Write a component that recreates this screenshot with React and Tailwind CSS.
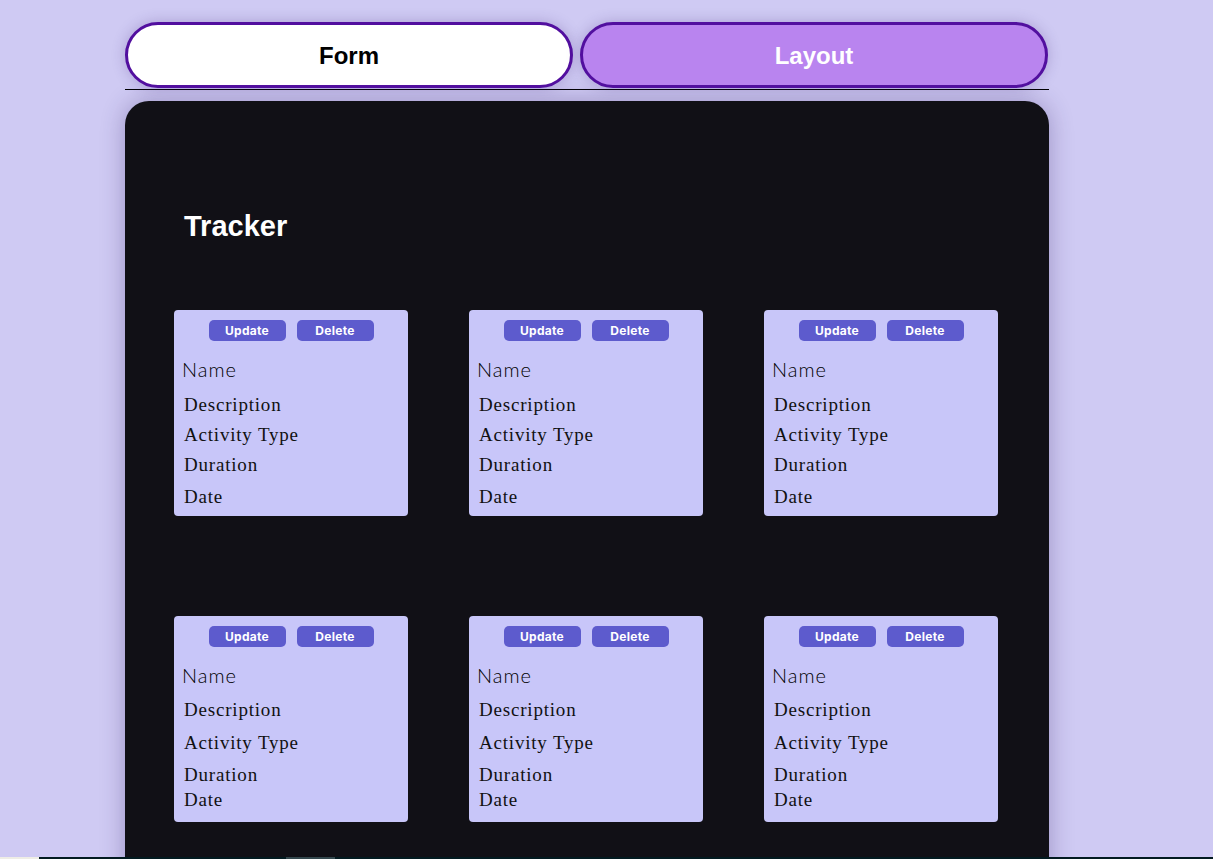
import React from "react";

function Card({ second }) {
  const serif = { fontFamily: '"Liberation Serif", "Times New Roman", serif' };
  return (
    <div className="w-[234px] h-[206px] bg-[#c8c6f9] rounded-[4px] pt-[10px] flex flex-col">
      <div className="flex justify-center gap-[11px]">
        <button
          className="w-[77px] h-[21px] rounded-[5px] bg-[#5d5bcd] text-white text-[12px] font-bold leading-none flex items-center justify-center tracking-[0.3px]"
          style={{ fontFamily: '"Inter", "Roboto", sans-serif' }}
        >
          Update
        </button>
        <button
          className="w-[77px] h-[21px] rounded-[5px] bg-[#5d5bcd] text-white text-[12px] font-bold leading-none flex items-center justify-center tracking-[0.3px]"
          style={{ fontFamily: '"Inter", "Roboto", sans-serif' }}
        >
          Delete
        </button>
      </div>
      <div className="pl-[8px] text-[#111] ">
        <div
          className="mt-[16px] text-[20px] leading-[24px] font-light tracking-[1px] text-black"
          style={{ fontFamily: '"Lato", "Noto Sans", sans-serif' }}
        >
          Name
        </div>
        {second ? (
          <div className="pl-[2px] text-[19px] tracking-[0.8px]" style={serif}>
            <div className="mt-[11px] leading-[24px]">Description</div>
            <div className="mt-[9px] leading-[24px]">Activity Type</div>
            <div className="mt-[8px] leading-[24px]">Duration</div>
            <div className="mt-[1px] leading-[24px]">Date</div>
          </div>
        ) : (
          <div className="pl-[2px] text-[19px] tracking-[0.8px]" style={serif}>
            <div className="mt-[12px] leading-[24px]">Description</div>
            <div className="mt-[6px] leading-[24px]">Activity Type</div>
            <div className="mt-[6px] leading-[24px]">Duration</div>
            <div className="mt-[8px] leading-[24px]">Date</div>
          </div>
        )}
      </div>
    </div>
  );
}

export default function App() {
  const sans = { fontFamily: '"Liberation Sans", Arial, sans-serif' };
  return (
    <div className="min-h-[859px] bg-[#cfcaf3] pt-[22px] overflow-hidden" style={sans}>
      <div className="ml-[125px] w-[924px]">
        <div className="flex gap-[7px] pb-[1px] border-b border-black">
          <button className="w-[448px] h-[66px] rounded-full border-[3px] border-[#520f9f] bg-white text-black text-[24px] font-bold pt-[1px] shadow-[0_0_14px_rgba(60,30,120,0.25)]">
            Form
          </button>
          <button className="w-[468px] h-[66px] rounded-full border-[3px] border-[#520f9f] bg-[#b984ef] text-white text-[24px] font-bold pt-[1px] shadow-[0_0_14px_rgba(60,30,120,0.25)]">
            Layout
          </button>
        </div>
        <div className="mt-[11px] bg-[#111016] rounded-t-[24px] min-h-[800px] shadow-[0_0_24px_rgba(40,20,90,0.3)] pt-[108px]">
          <h1 className="ml-[59px] text-white text-[29px] font-bold leading-[34px]">Tracker</h1>
          <div className="mt-[67px] pl-[49px] grid grid-cols-[234px_234px_234px] gap-x-[61px] gap-y-[100px]">
            <Card />
            <Card />
            <Card />
            <Card second />
            <Card second />
            <Card second />
          </div>
        </div>
      </div>
      <div className="fixed left-0 right-0 bottom-0 h-[2px] flex">
        <div className="w-[39px] bg-[#eeede6]" />
        <div className="w-[247px] bg-[#021a20]" />
        <div className="w-[49px] bg-[#33474d]" />
        <div className="flex-1 bg-[#021a20]" />
      </div>
    </div>
  );
}
